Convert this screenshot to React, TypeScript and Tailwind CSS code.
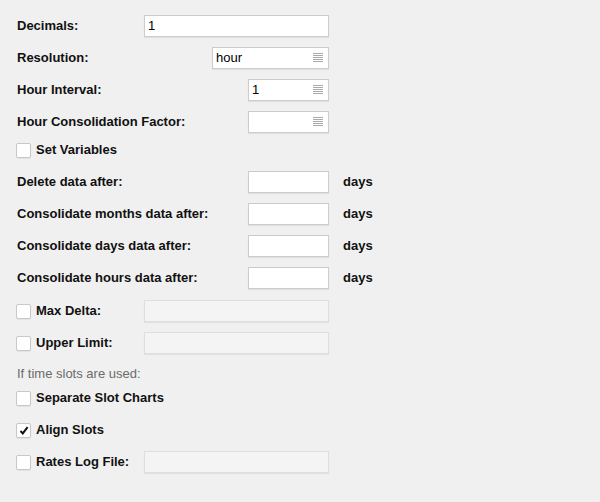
import React from 'react';

const font = { fontFamily: '"Liberation Sans", Arial, Helvetica, sans-serif' };

function ListIcon() {
  return (
    <svg width="10" height="10" viewBox="0 0 10 10" className="absolute right-[5px] top-[5px]" shapeRendering="crispEdges">
      {[0, 2, 4, 6, 8].map((y) => (
        <rect key={y} x="0" y={y} width="10" height="1" fill="#a9a9a9" />
      ))}
    </svg>
  );
}

function Field({ width, value, select, disabled }: { width: string; value?: string; select?: boolean; disabled?: boolean }) {
  return (
    <div
      className={`relative h-[22px] ${width} border flex items-center px-[3px] text-[13px] text-black shadow-[0_1px_1px_rgba(0,0,0,0.06)] ${
        disabled ? 'bg-[#f4f4f4] border-[#dedede]' : 'bg-white border-[#cccccc]'
      }`}
    >
      {value}
      {select && <ListIcon />}
    </div>
  );
}

function Box({ checked }: { checked?: boolean }) {
  return (
    <div className="w-[15px] h-[15px] bg-white border border-[#c8c8c8] rounded-[2px] shadow-[0_1px_1px_rgba(0,0,0,0.06)] flex items-center justify-center shrink-0">
      {checked && (
        <svg width="10" height="9" viewBox="0 0 10 9">
          <path d="M1.5 5 L3.8 7.4 L8.6 1.2" stroke="#111" strokeWidth="2" fill="none" />
        </svg>
      )}
    </div>
  );
}

function Row({ label, children, days, mt = 'mt-[10px]' }: { label: string; children: React.ReactNode; days?: boolean; mt?: string }) {
  return (
    <div className={`flex items-center h-[22px] ${mt}`}>
      <div className="w-[313px] flex items-center justify-between">
        <span className="pl-[1px] font-bold text-[13px] text-[#111]">{label}</span>
        {children}
      </div>
      {days && <span className="ml-[14px] font-bold text-[13px] text-[#111]">days</span>}
    </div>
  );
}

function CheckRow({ label, checked, input, mt = 'mt-[10px]' }: { label: string; checked?: boolean; input?: boolean; mt?: string }) {
  return (
    <div className={`flex items-center h-[22px] ${mt}`}>
      <div className="w-[313px] flex items-center">
        <Box checked={checked} />
        <span className="ml-[5px] font-bold text-[13px] text-[#111]">{label}</span>
        {input && (
          <div className="ml-auto">
            <Field width="w-[185px]" disabled />
          </div>
        )}
      </div>
    </div>
  );
}

export default function App() {
  return (
    <div className="w-[600px] h-[502px] bg-[#f0f0f0] pl-[16px] pt-[5px] flex flex-col" style={font}>
      <Row label="Decimals:">
        <Field width="w-[185px]" value="1" />
      </Row>
      <Row label="Resolution:">
        <Field width="w-[117px]" value="hour" select />
      </Row>
      <Row label="Hour Interval:">
        <Field width="w-[81px]" value="1" select />
      </Row>
      <Row label="Hour Consolidation Factor:">
        <Field width="w-[81px]" select />
      </Row>
      <CheckRow label="Set Variables" mt="mt-[6px]" />
      <Row label="Delete data after:" days mt="mt-[10px]">
        <Field width="w-[81px]" />
      </Row>
      <Row label="Consolidate months data after:" days>
        <Field width="w-[81px]" />
      </Row>
      <Row label="Consolidate days data after:" days>
        <Field width="w-[81px]" />
      </Row>
      <Row label="Consolidate hours data after:" days>
        <Field width="w-[81px]" />
      </Row>
      <CheckRow label="Max Delta:" input mt="mt-[11px]" />
      <CheckRow label="Upper Limit:" input />
      <div className="h-[22px] mt-[9px] flex items-center pl-[1px] text-[13px] text-[#6b6b6b]">If time slots are used:</div>
      <CheckRow label="Separate Slot Charts" mt="mt-[2px]" />
      <CheckRow label="Align Slots" checked mt="mt-[10px]" />
      <CheckRow label="Rates Log File:" input />
    </div>
  );
}
